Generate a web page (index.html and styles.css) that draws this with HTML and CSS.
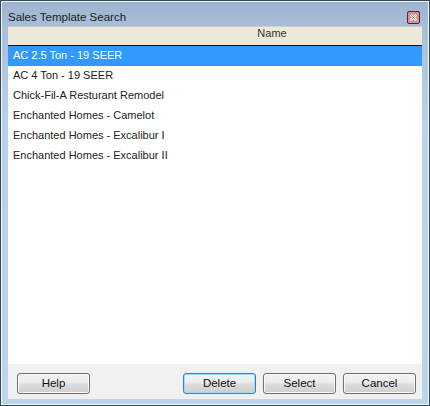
FILE: index.html
```html
<!DOCTYPE html>
<html lang="en">
<head>
<meta charset="utf-8">
<title>Sales Template Search</title>
<link rel="stylesheet" href="styles.css">
</head>
<body>
<div class="window">
  <div class="titlebar">
    <span class="title">Sales Template Search</span>
    <span class="close"><svg width="12" height="12" viewBox="0 0 12 12"><path d="M3 3l6 6M9 3l-6 6" stroke="#fff" stroke-width="2.6" fill="none"/><path d="M3.5 3.5l5 5M8.5 3.5l-5 5" stroke="#4a3a3a" stroke-width=".5" fill="none"/></svg></span>
  </div>
  <div class="client">
    <div class="header">Name</div>
    <ul class="list">
      <li class="row selected">AC 2.5 Ton - 19 SEER</li>
      <li class="row">AC 4 Ton - 19 SEER</li>
      <li class="row">Chick-Fil-A Resturant Remodel</li>
      <li class="row">Enchanted Homes - Camelot</li>
      <li class="row">Enchanted Homes - Excalibur I</li>
      <li class="row">Enchanted Homes - Excalibur II</li>
    </ul>
    <div class="footer">
      <button class="btn">Help</button>
      <span class="spacer"></span>
      <button class="btn default">Delete</button>
      <button class="btn">Select</button>
      <button class="btn">Cancel</button>
    </div>
  </div>
</div>
</body>
</html>
```
FILE: styles.css
```css
* { box-sizing: border-box; }
html, body { margin: 0; padding: 0; }
body { width: 430px; height: 406px; background: #fff; overflow: hidden; font-family: "Liberation Sans", Arial, sans-serif; font-size: 11px; }
.window {
  width: 428px; height: 404px; margin-left: 1px; margin-top: 1px;
  display: flex; flex-direction: column;
  background: linear-gradient(180deg, #9fb5cf 0, #a9bfd9 26px, #b9d1ea 120px, #bcd4ec 100%);
  box-shadow: 0 0 0 1px #2f4b57;
  border: 1px solid #f2f6fa;
  padding: 0 6px 5px 6px;
}
.titlebar { height: 24px; display: flex; align-items: center; justify-content: space-between; flex: none; }
.title { color: #1a1a1a; padding-top: 6px; font-size: 11.5px; }
.close {
  width: 13px; height: 13px; margin-right: 2px; margin-top: 6px; display: flex; align-items: center; justify-content: center;
  background: #d98f8f; border: 1px solid #4a2a30; border-radius: 2px;
}
.close svg { display: block; width: 11px; height: 11px; }
.client { flex: 1; display: flex; flex-direction: column; min-height: 0; background: #fff; }
.header {
  height: 20px; flex: none; background: #ebe9da; border-bottom: 1px solid #111; border-top: 1px solid #cfcdbf;
  text-align: center; color: #333; line-height: 13px; font-size: 11px; padding-left: 114px;
}
.list { list-style: none; margin: 0; padding: 0; flex: 1; background: #fff; }
.row { height: 20px; line-height: 19px; padding-left: 5px; color: #222; }
.row.selected { background: #3399ff; color: #fff; }
.footer { height: 35px; flex: none; background: #f0f0f0; display: flex; align-items: flex-start; gap: 7px; padding: 9px 6px 0 9px; }
.spacer { flex: 1; }
.btn {
  width: 73px; height: 21px; padding: 0 0 1px; border: 1px solid #707070; border-radius: 3px; font: inherit; font-size: 11.5px; color: #111;
  background: linear-gradient(180deg, #f2f2f2 0, #ebebeb 48%, #dddddd 52%, #cfcfcf 100%);
  box-shadow: inset 0 0 0 1px #f8f8f8;
}
.btn.default { border-color: #3c7fb1; box-shadow: inset 0 0 0 1px #9fdcf3; }
```
